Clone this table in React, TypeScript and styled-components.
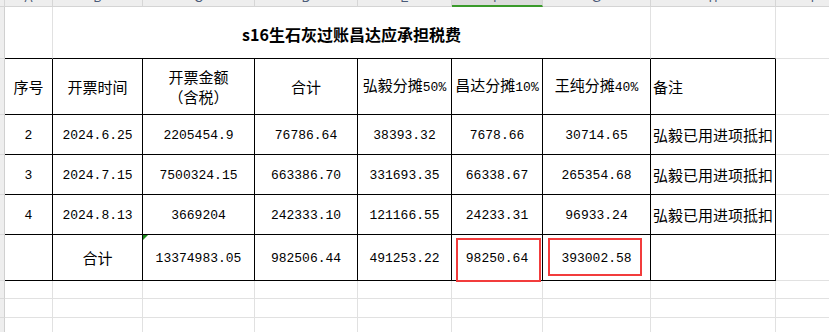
import React from 'react';
import styled, { createGlobalStyle } from 'styled-components';

const GlobalStyle = createGlobalStyle`
  html, body {
    margin: 0;
    padding: 0;
    background: #fff;
    overflow: hidden;
  }
  body {
    font-family: "Noto Sans CJK SC", "Liberation Sans", sans-serif;
    color: #000;
  }
`;

const COLS = [5, 48, 90, 112, 103, 94, 91, 108, 125, 74];
const ROWS = [7, 52, 56, 40, 40, 40, 46, 18, 19, 19];
const LETTERS = ['', 'A', 'B', 'C', 'D', 'E', 'F', 'G', 'H', 'I'];
const SELECTED = 6;

const DARK = '#000';
const GRID = '#e1e1e1';

const Sheet = styled.div`
  display: grid;
  grid-template-columns: ${COLS.map((c) => `${c}px`).join(' ')};
  grid-template-rows: ${ROWS.map((r) => `${r}px`).join(' ')};
  width: 829px;
  overflow: hidden;
`;

const ColHead = styled.div<{ $sel?: boolean }>`
  box-sizing: border-box;
  background: ${(p) => (p.$sel ? '#dcdcdc' : '#eeeeee')};
  border-right: 1px solid #d6d6d6;
  border-bottom: ${(p) => (p.$sel ? '2px solid #3a9a2b' : '1px solid #d4d4d4')};
  display: flex;
  justify-content: center;
  align-items: flex-start;
  overflow: hidden;
`;

const Letter = styled.span`
  font-family: "Liberation Sans", sans-serif;
  font-size: 12px;
  line-height: 12px;
  margin-top: -8px;
  color: #4a5a78;
`;

const RowHead = styled.div`
  box-sizing: border-box;
  background: #eeeeee;
  border-right: 1px solid #d0d0d0;
  border-bottom: 1px solid #dadada;
`;

const Cell = styled.div<{ $r?: boolean; $b?: boolean; $align?: 'left' | 'center'; $span?: number }>`
  position: relative;
  box-sizing: border-box;
  grid-column: ${(p) => (p.$span ? `span ${p.$span}` : 'auto')};
  border-right: 1px solid ${(p) => (p.$r ? DARK : GRID)};
  border-bottom: 1px solid ${(p) => (p.$b ? DARK : GRID)};
  display: flex;
  flex-direction: column;
  justify-content: center;
  align-items: ${(p) => (p.$align === 'left' ? 'flex-start' : 'center')};
  padding-left: ${(p) => (p.$align === 'left' ? '2px' : '0')};
  font-size: 15px;
  line-height: 20px;
  white-space: nowrap;
`;

const Title = styled.span`
  font-size: 16px;
  font-weight: bold;
  line-height: 20px;
  margin-top: 2px;
`;

const Num = styled.span`
  font-family: "Liberation Mono", monospace;
  font-size: 13px;
`;

const Flag = styled.span`
  position: absolute;
  left: 0;
  top: 0;
  width: 0;
  height: 0;
  border-top: 5px solid #1c8a1c;
  border-right: 5px solid transparent;
`;

const Mark = styled.div<{ $x: number; $y: number; $w: number; $h: number }>`
  position: absolute;
  left: ${(p) => p.$x}px;
  top: ${(p) => p.$y}px;
  width: ${(p) => p.$w}px;
  height: ${(p) => p.$h}px;
  box-sizing: border-box;
  border: 2px solid #f23c3c;
  z-index: 2;
`;

const mix = (s: string) =>
  s.split(/([\x20-\x7e]+)/).filter(Boolean).map((part, i) =>
    /^[\x20-\x7e]+$/.test(part) ? <Num key={i}>{part}</Num> : <span key={i}>{part}</span>
  );

const DATA = [
  ['2', '2024.6.25', '2205454.9', '76786.64', '38393.32', '7678.66', '30714.65', '弘毅已用进项抵扣'],
  ['3', '2024.7.15', '7500324.15', '663386.70', '331693.35', '66338.67', '265354.68', '弘毅已用进项抵扣'],
  ['4', '2024.8.13', '3669204', '242333.10', '121166.55', '24233.31', '96933.24', '弘毅已用进项抵扣'],
];

const TOTAL = ['', '合计', '13374983.05', '982506.44', '491253.22', '98250.64', '393002.58', ''];

const HEADERS: string[][] = [
  ['序号'],
  ['开票时间'],
  ['开票金额', '（含税）'],
  ['合计'],
  ['弘毅分摊50%'],
  ['昌达分摊10%'],
  ['王纯分摊40%'],
  ['备注'],
];

const App = () => {
  return (
    <>
      <GlobalStyle />
      <Sheet>
        {LETTERS.map((l, i) => (
          <ColHead key={`h${i}`} $sel={i === SELECTED}>
            {l && <Letter>{l}</Letter>}
          </ColHead>
        ))}

        <RowHead />
        <Cell $b />
        <Cell $b $span={6}>
          <Title>s16生石灰过账昌达应承担税费</Title>
        </Cell>
        <Cell $b />
        <Cell />

        <RowHead />
        {HEADERS.map((h, i) => (
          <Cell key={`hd${i}`} $r $b $align={i === 7 ? 'left' : 'center'}>
            {h.map((line, j) => (
              <div key={j}>{mix(line)}</div>
            ))}
          </Cell>
        ))}
        <Cell />

        {DATA.map((row, ri) => (
          <React.Fragment key={`r${ri}`}>
            <RowHead />
            {row.map((v, ci) => (
              <Cell key={ci} $r $b $align={ci === 7 ? 'left' : 'center'}>
                <div>{mix(v)}</div>
              </Cell>
            ))}
            <Cell />
          </React.Fragment>
        ))}

        <RowHead />
        {TOTAL.map((v, ci) => (
          <Cell key={`t${ci}`} $r $b>
            {ci === 2 && <Flag />}
            {ci === 5 && <Mark $x={4} $y={3} $w={85} $h={44} />}
            {ci === 6 && <Mark $x={5} $y={3} $w={94} $h={38} />}
            <div>{mix(v)}</div>
          </Cell>
        ))}
        <Cell />

        {[0, 1, 2].map((r) => (
          <React.Fragment key={`e${r}`}>
            <RowHead />
            {COLS.slice(1).map((_, ci) => (
              <Cell key={ci} />
            ))}
          </React.Fragment>
        ))}
      </Sheet>
    </>
  );
};

export default App;
